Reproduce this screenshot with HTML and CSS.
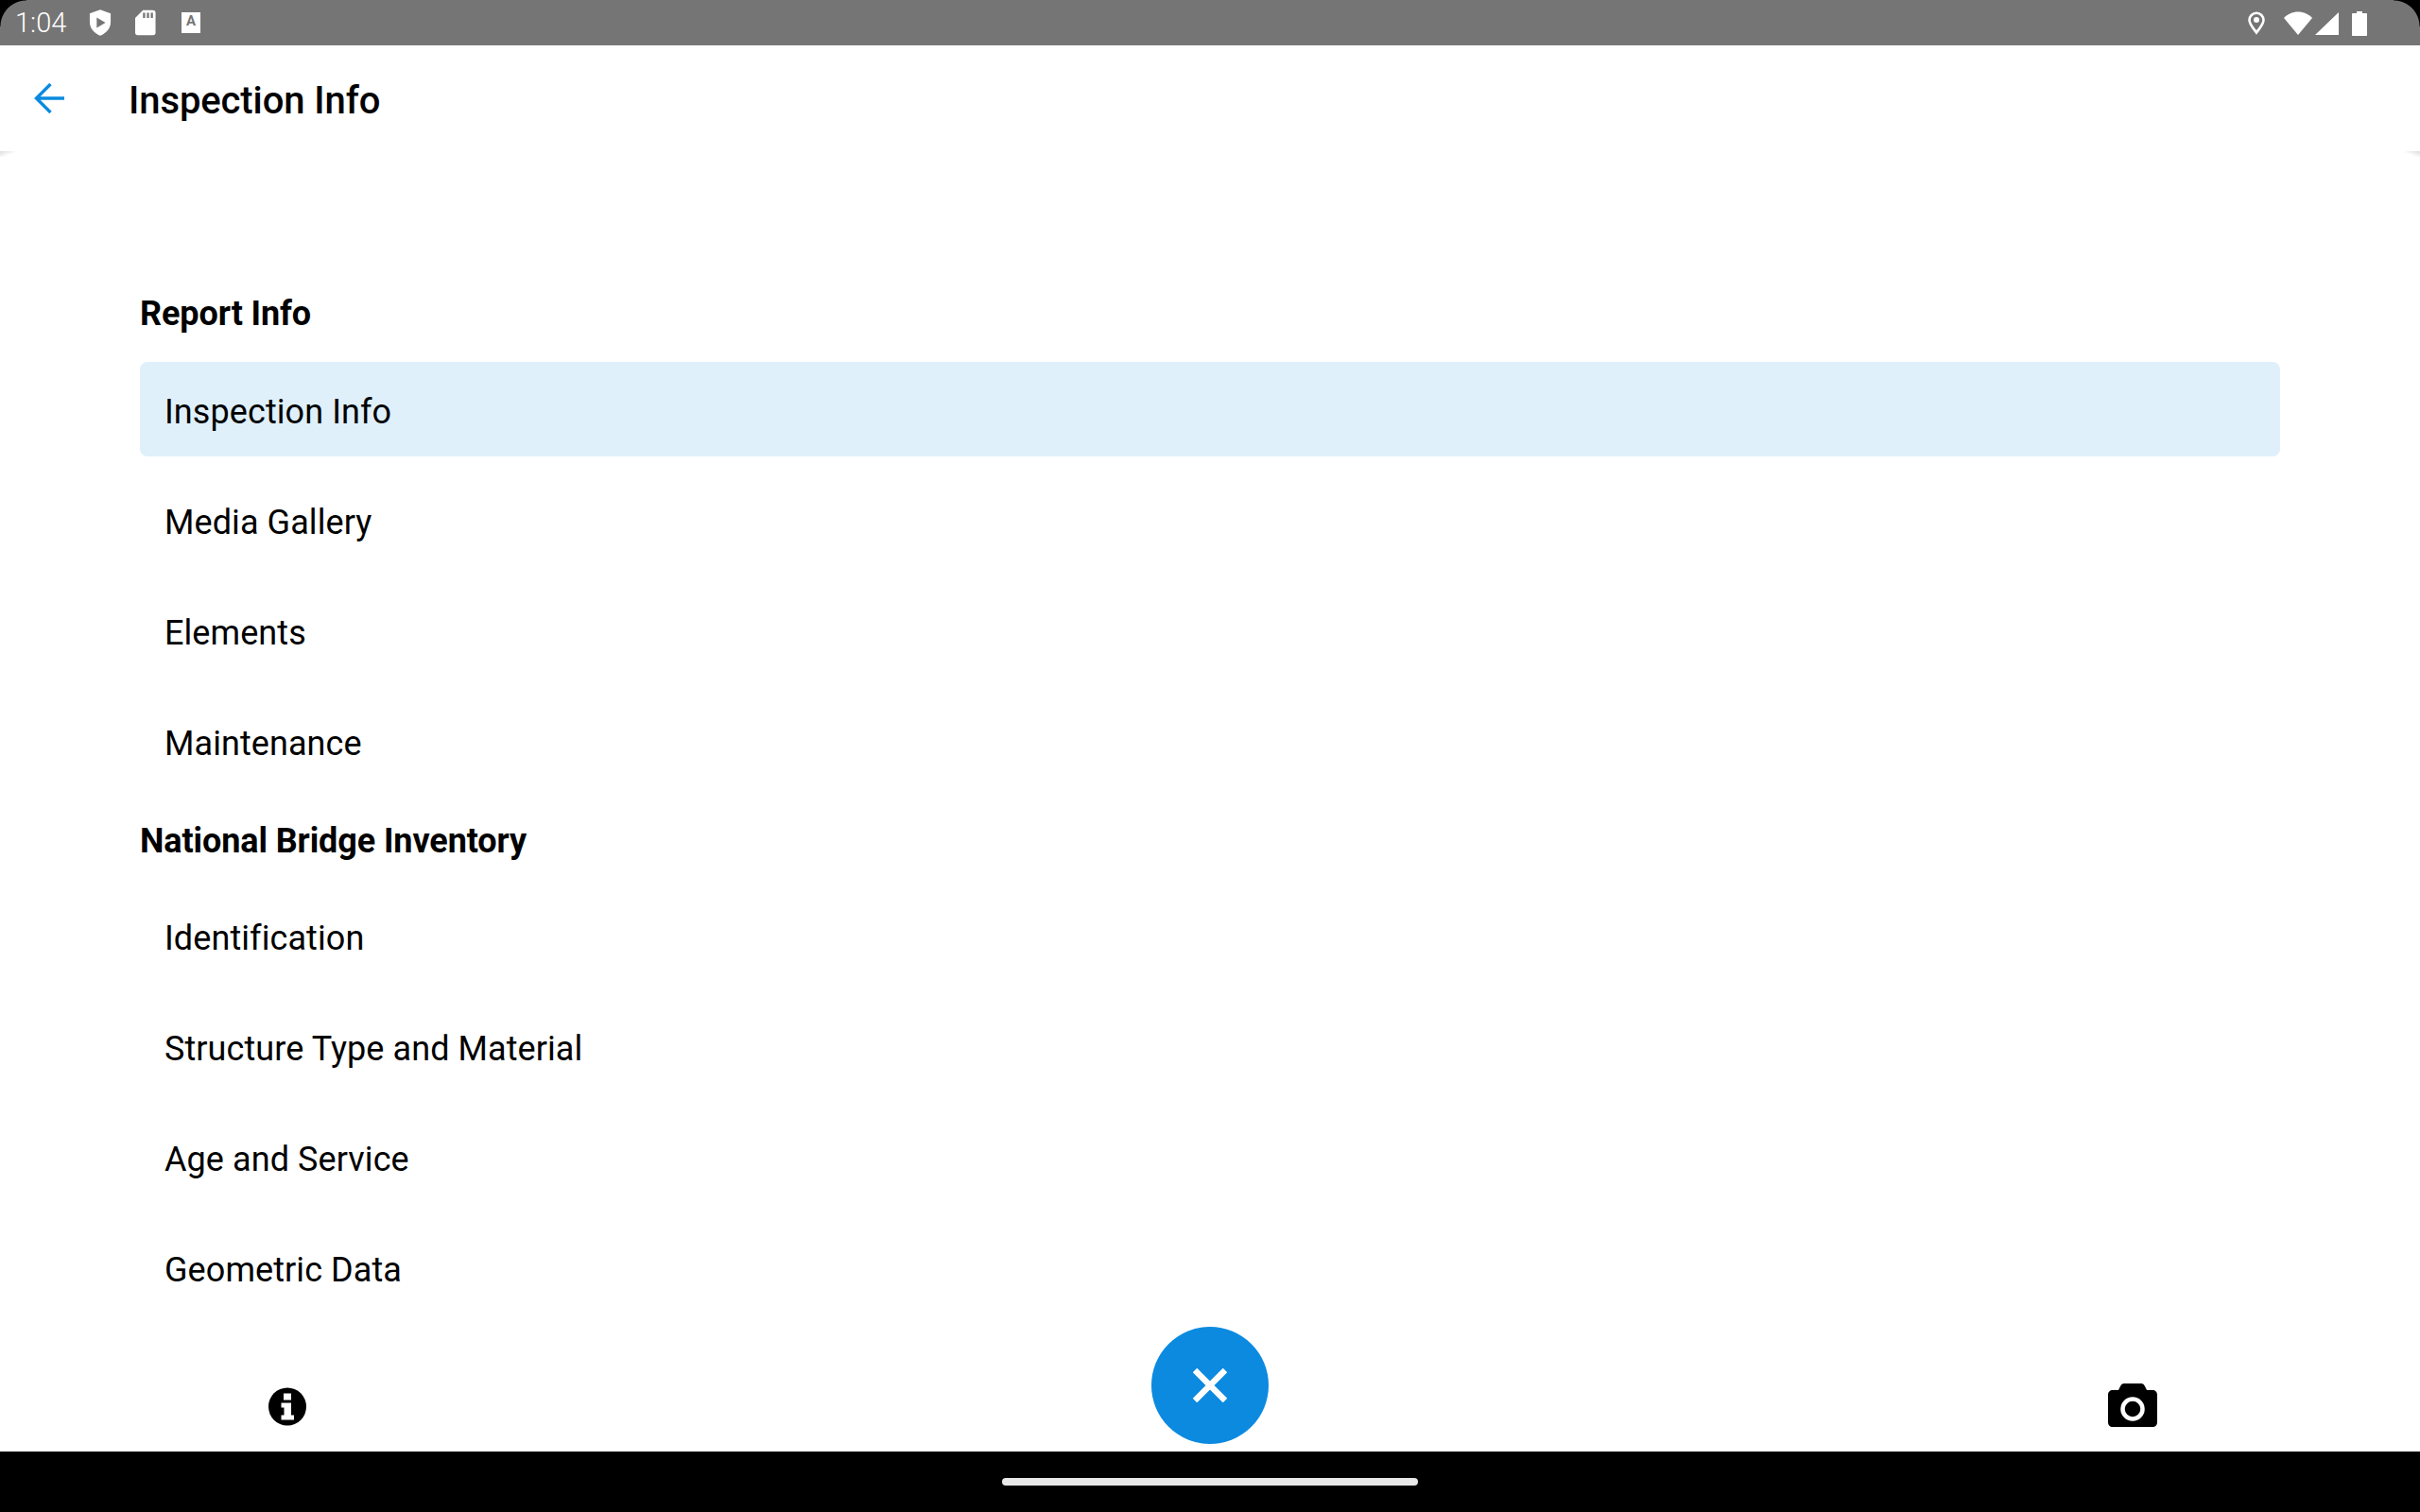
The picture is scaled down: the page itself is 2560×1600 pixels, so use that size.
FILE: index.html
```html
<!DOCTYPE html>
<html lang="en">
<head>
<meta charset="utf-8">
<title>Inspection Info</title>
<link rel="stylesheet" href="styles.css">
</head>
<body>
<div class="screen">
  <div class="statusbar">
    <div class="status-left">
      <span class="clock">1:04</span>
      <svg class="ic-shield" viewBox="0 0 26 30"><path fill="#fff" d="M13 0 L25 4.500 V14 C25 22 20 27 13 30 C6 27 1 22 1 14 V4.500 Z"/><path fill="#757575" d="M9 9 L19 15 L9 21 Z"/></svg>
      <svg class="ic-sd" viewBox="0 0 24 29"><path fill="#fff" d="M9 0 H20 C22.500 0 23.500 1 23.500 3 V26 C23.500 28 22.500 29 20.500 29 H3 C1 29 0 28 0 26 V9 Z"/><path fill="#757575" d="M9 3 H11.500 V9 H9 Z M13.500 3 H16 V9 H13.500 Z M18 3 H20.500 V9 H18 Z"/></svg>
      <span class="ic-a"><span class="ic-a-letter">A</span></span>
    </div>
    <div class="status-right">
      <svg class="ic-pin" viewBox="0 0 18 24"><path fill="none" stroke="#fff" stroke-width="2.600" d="M9 22 C5 16.500 1.500 13 1.500 8.800 A7.500 7.500 0 0 1 16.500 8.800 C16.500 13 13 16.500 9 22 Z"/><circle cx="9" cy="8.500" r="3" fill="#fff"/></svg>
      <svg class="ic-wifi" viewBox="0 0 30 25"><path fill="#fff" d="M15 25 L0 7 C4 3 9 0.500 15 0.500 C21 0.500 26 3 30 7 Z"/></svg>
      <svg class="ic-signal" viewBox="0 0 25 24"><path fill="#fff" d="M25 0 V24 H0 Z"/></svg>
      <svg class="ic-battery" viewBox="0 0 16 26"><path fill="#fff" d="M5 0 H11 V2 H15 C15.600 2 16 2.400 16 3 V25 C16 25.600 15.600 26 15 26 H1 C0.400 26 0 25.600 0 25 V3 C0 2.400 0.400 2 1 2 H5 Z"/></svg>
    </div>
    <span class="corner corner-left"></span>
    <span class="corner corner-right"></span>
  </div>

  <header class="appbar">
    <svg class="ic-back" viewBox="0 0 32 32"><path fill="none" stroke="#0b8ae0" stroke-width="3.400" d="M32 16 H2 M17.500 1 L2.500 16 L17.500 31"/></svg>
    <h1 class="title">Inspection Info</h1>
  </header>

  <main class="content">
    <h2 class="section section-first">Report Info</h2>
    <ul class="list">
      <li class="row row-selected">Inspection Info</li>
      <li class="row">Media Gallery</li>
      <li class="row">Elements</li>
      <li class="row">Maintenance</li>
    </ul>
    <h2 class="section section-next">National Bridge Inventory</h2>
    <ul class="list">
      <li class="row">Identification</li>
      <li class="row">Structure Type and Material</li>
      <li class="row">Age and Service</li>
      <li class="row">Geometric Data</li>
    </ul>
  </main>

  <div class="toolbar">
    <svg class="ic-info" viewBox="0 0 40 40"><circle cx="20" cy="20" r="20" fill="#000"/><rect x="16" y="6" width="8" height="7" fill="#fff"/><path fill="#fff" d="M13.500 16 H24 V29 H27 V34 H13.500 V29 H16.500 V21 H13.500 Z"/></svg>
    <button class="fab" type="button" aria-label="Close">
      <svg class="ic-close" viewBox="0 0 36 36"><path stroke="#fff" stroke-width="6.500" d="M2 2 L34 34 M34 2 L2 34"/></svg>
    </button>
    <svg class="ic-camera" viewBox="0 0 52 46"><path fill="#000" d="M17 0 H35 C37 0 38 1 39 3 L41 7 H47 C50 7 52 9 52 12 V41 C52 44 50 46 47 46 H5 C2 46 0 44 0 41 V12 C0 9 2 7 5 7 H11 L13 3 C14 1 15 0 17 0 Z"/><circle cx="26" cy="27" r="10.500" fill="none" stroke="#fff" stroke-width="4.500"/></svg>
  </div>

  <div class="navbar"><span class="home-pill"></span></div>
</div>
</body>
</html>
```
FILE: styles.css
```css
* { box-sizing: border-box; }
html, body { margin: 0; padding: 0; }
body { background: #fff; font-family: Roboto, "Liberation Sans", sans-serif; color: #000; }
.screen { width: 2560px; height: 1600px; display: flex; flex-direction: column; overflow: hidden; position: relative; background: #fff; }

.statusbar { height: 48px; flex: none; background: #757575; display: flex; justify-content: space-between; align-items: center; padding: 0 56px 0 16px; position: relative; }
.status-left, .status-right { display: flex; align-items: center; }
.clock { color: #fff; font-size: 29px; width: 56px; font-weight: 300; margin-right: 22px; }
.ic-shield { width: 24px; height: 30px; margin-right: 25px; }
.ic-sd { width: 22px; height: 28px; margin-right: 27px; }
.ic-a { width: 20px; height: 22px; background: #fff; display: flex; justify-content: center; }
.ic-a-letter { color: #757575; font-size: 15px; line-height: 18px; font-weight: 700; }
.ic-pin { width: 18px; height: 25px; margin-right: 20px; }
.ic-wifi { width: 30px; height: 25px; margin-right: 3px; }
.ic-signal { width: 25px; height: 24px; margin-right: 14px; margin-top: 1px; }
.ic-battery { width: 16px; height: 26px; margin-top: 1px; }
.corner { position: absolute; top: 0; width: 28px; height: 28px; background: radial-gradient(circle at 100% 100%, transparent 27px, #000 28px); }
.corner-left { left: 0; }
.corner-right { right: 0; transform: scaleX(-1); }

.appbar { height: 112px; flex: none; display: flex; align-items: center; position: relative; padding-left: 36px; z-index: 1; background: #fff; }
.appbar::before, .appbar::after { content: ""; position: absolute; top: 100%; width: 16px; height: 6px; background: linear-gradient(to bottom right, #dcdcdc, #fff 65%); }
.appbar::before { left: 0; }
.appbar::after { right: 0; transform: scaleX(-1); }
.ic-back { width: 32px; height: 32px; margin-right: 68px; }
.title { margin: 0; padding-top: 6px; font-size: 40px; line-height: 48px; font-weight: 470; letter-spacing: -0.1px; }

.content { flex: 1; min-height: 0; overflow: hidden; padding: 0 148px; }
.section { margin: 0; font-size: 36px; line-height: 48px; height: 48px; font-weight: 700; letter-spacing: -0.1px; }
.section-first { margin: 148px 0 27px; }
.section-next { margin: 32px 0 26px; }
.list { list-style: none; margin: 0; padding: 0; display: flex; flex-direction: column; gap: 17px; }
.row { height: 100px; font-size: 36px; line-height: 100px; padding: 3px 0 0 26px; letter-spacing: 0.08px; border-radius: 8px; font-weight: 390; }
.row-selected { background: #dff0fb; }

.toolbar { position: absolute; left: 0; right: 0; top: 1404px; height: 132px; display: grid; grid-template-columns: 1fr auto 1fr; align-items: start; padding: 0 278px 0 284px; }
.ic-info { width: 40px; height: 41px; margin-top: 64px; justify-self: start; }
.fab { width: 124px; height: 124px; border: 0; padding: 0; border-radius: 50%; background: #0b8ae0; display: flex; align-items: center; justify-content: center; position: relative; left: -3px; }
.ic-close { width: 36px; height: 36px; }
.ic-camera { width: 52px; height: 46px; margin-top: 60px; justify-self: end; }

.navbar { position: absolute; left: 0; right: 0; bottom: 0; height: 64px; background: #000; display: flex; justify-content: center; padding-top: 28px; }
.home-pill { width: 440px; height: 8px; background: #e8e8e8; border-radius: 4px; }
```
